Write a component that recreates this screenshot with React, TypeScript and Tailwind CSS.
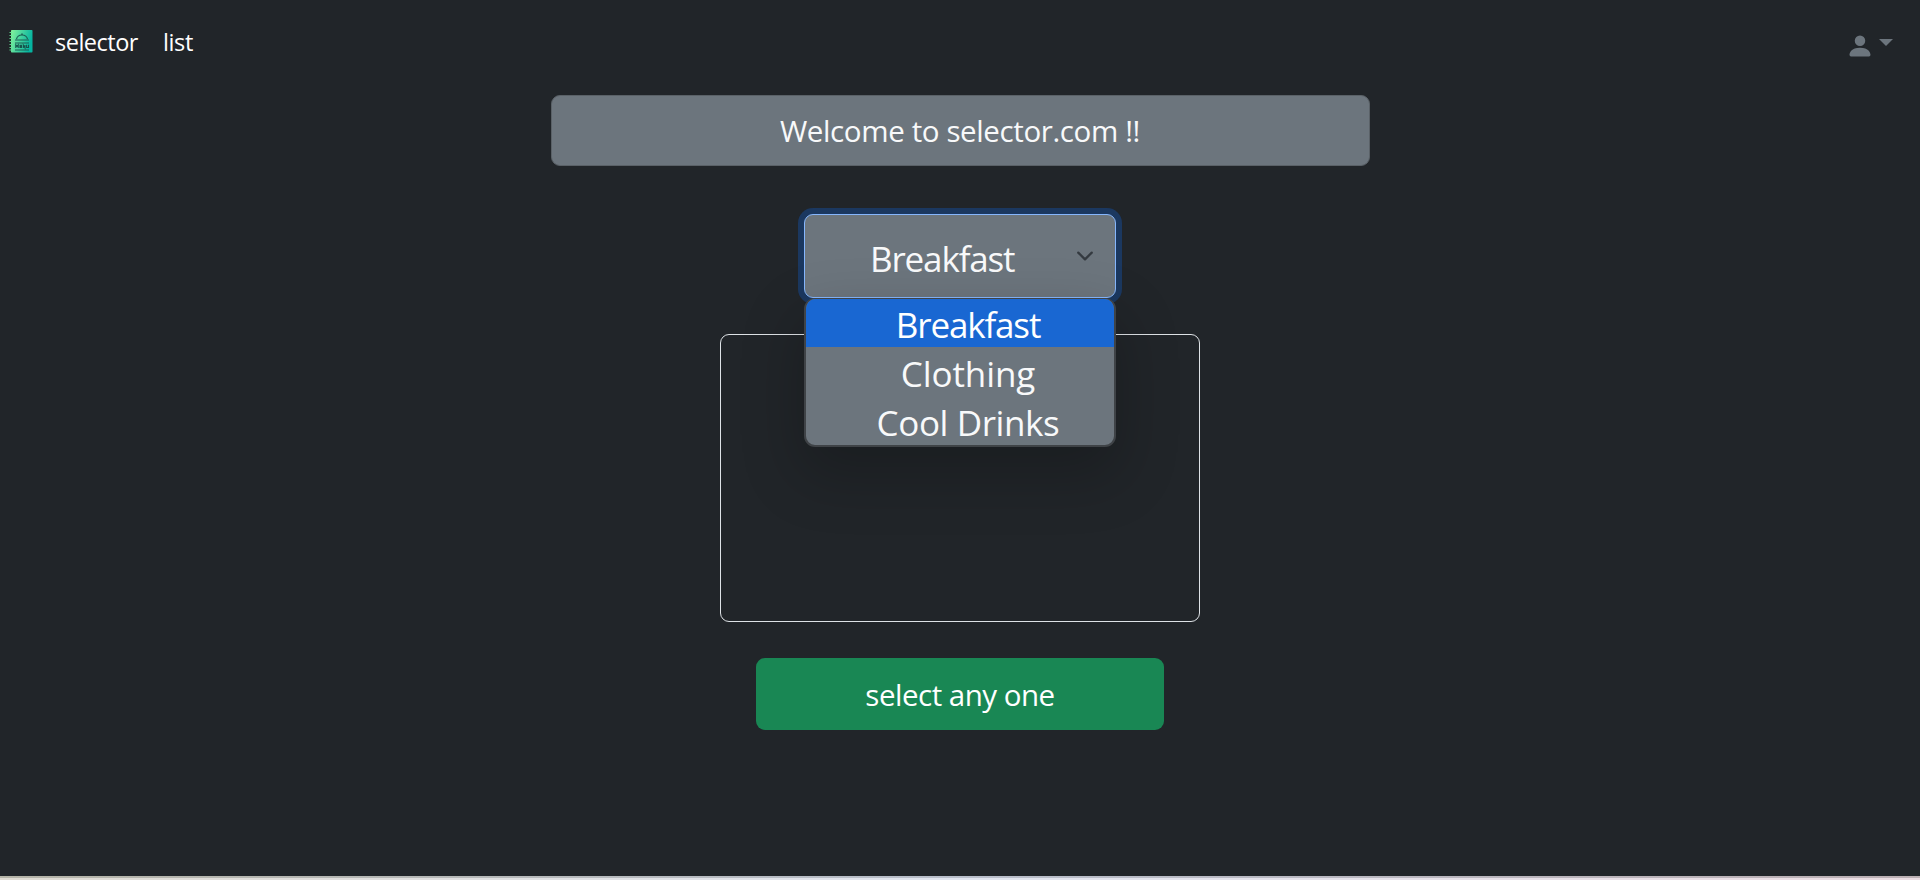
const options = [
  { name: "Breakfast", row: "h-[48px] bg-[#1967d2] pt-px text-white", text: "tracking-[-1.150px]" },
  { name: "Clothing", row: "h-[49px] pt-[2px]", text: "tracking-[-0.100px]" },
  { name: "Cool Drinks", row: "h-[49px] pt-[2px]", text: "tracking-[-0.400px]" },
];

function MenuBookIcon() {
  return (
    <svg className="h-6 w-6" viewBox="0 0 24 24" fill="none">
      <defs>
        <linearGradient id="cover" x1="0" y1="0" x2="1" y2="0.3">
          <stop offset="0" stopColor="#84f29c" />
          <stop offset="1" stopColor="#05b4a0" />
        </linearGradient>
      </defs>
      <rect x="2" y="1" width="21.500" height="22.500" rx="0.800" fill="url(#cover)" />
      <path stroke="#5fd68e" strokeWidth="1.200" d="M0.500 3.500h2M0.500 6.500h2M0.500 9.500h2M0.500 12.500h2M0.500 15.500h2M0.500 18.500h2M0.500 21h2" />
      <path stroke="#1d5f55" strokeWidth="1.200" d="M7.500 10.200C8 7.500 10 6 13 6s5 1.500 5.500 4.200M6 11h14M6 14h14M6 21h14M12.200 5h1.600" />
      <path stroke="#17534c" strokeWidth="1.100" d="M6.800 19v-3.200l1.200 1.500 1.200-1.500V19M13 16.200h-2v2.300h2M11 17.400h2M14.300 19v-3l1.700 3v-3M17.600 15.700v2.800h1.900v-2.800" />
    </svg>
  );
}

export default function App() {
  return (
    <div className="flex h-[880px] w-full flex-col overflow-hidden bg-[#212529] font-['Open_Sans','Noto_Sans',sans-serif] text-[#f8f9fa]">
      <nav className="flex h-[95px] shrink-0 items-start pl-[9px] pr-[27px] pt-[29px]">
        <MenuBookIcon />
        <div className="-mt-px flex grow gap-[25px] pl-[22px] text-[23.500px] leading-[28px] text-white">
          <a className="tracking-[-0.500px]">selector</a>
          <a className="tracking-[-0.350px]">list</a>
        </div>
        <button className="flex items-start gap-[5px] pt-[3px] text-[#6c757d]">
          <svg className="h-7 w-7" viewBox="0 0 16 16" fill="currentColor">
            <path d="M3 14s-1 0-1-1 1-4 6-4 6 3 6 4-1 1-1 1zm5-6a3 3 0 1 0 0-6 3 3 0 0 0 0 6" />
          </svg>
          <svg className="mt-[7px] h-[7px] w-[14px]" viewBox="0 0 14 7" fill="currentColor">
            <path d="M0 0h14L7 7z" />
          </svg>
        </button>
      </nav>
      <main className="flex grow flex-col items-center">
        <h1 className="flex h-[71px] w-[819px] shrink-0 items-center justify-center rounded-[9px] border border-[#5a6167] bg-[#6c757d] pt-[2px] text-[29.500px] tracking-[-0.380px]">
          Welcome to selector.com !!
        </h1>
        <div className="relative z-10 mt-12 h-[84px] w-[312px] shrink-0">
          <div className="flex h-full items-center justify-between rounded-[9px] border border-[#86b7fe] bg-[#6c757d] pl-[65px] pr-[21px] text-[35px] ring-6 ring-[#1b3860]">
            <span className="pt-[6px] tracking-[-1.150px]">Breakfast</span>
            <svg className="h-[18px] w-[18px]" viewBox="0 0 16 16" fill="none" stroke="#343a40" strokeWidth="2" strokeLinecap="round" strokeLinejoin="round">
              <path d="m2 5 6 6 6-6" />
            </svg>
          </div>
          <ul className="absolute left-0 top-[84px] w-[312px] overflow-hidden rounded-[11px] border-2 border-t border-[#3f4347] bg-[#6c757d] text-center text-[35px] leading-[49px] shadow-[0_24px_60px_6px_rgba(0,0,0,0.2)]">
            {options.map((option) => (
              <li key={option.name} className={option.row}>
                <span className={`pl-4 ${option.text}`}>{option.name}</span>
              </li>
            ))}
          </ul>
        </div>
        <section className="mt-9 h-[288px] w-[480px] shrink-0 rounded-[9px] border border-[#dee2e6]" />
        <button className="mt-9 flex h-[72px] w-[408px] shrink-0 items-center justify-center rounded-[9px] bg-[#198754] pt-[2px] text-[29.500px] text-white">
          <span className="tracking-[-0.500px]">select any one</span>
        </button>
      </main>
      <footer className="flex h-1 shrink-0 flex-col">
        <div className="h-0.5 bg-linear-to-r from-[#b5b4a8] via-[#b9bfcb] to-[#bcb0b4]" />
        <div className="h-0.5 bg-linear-to-r from-[#e0dcd4] via-[#e2e6f0] to-[#ecdde3]" />
      </footer>
    </div>
  );
}
